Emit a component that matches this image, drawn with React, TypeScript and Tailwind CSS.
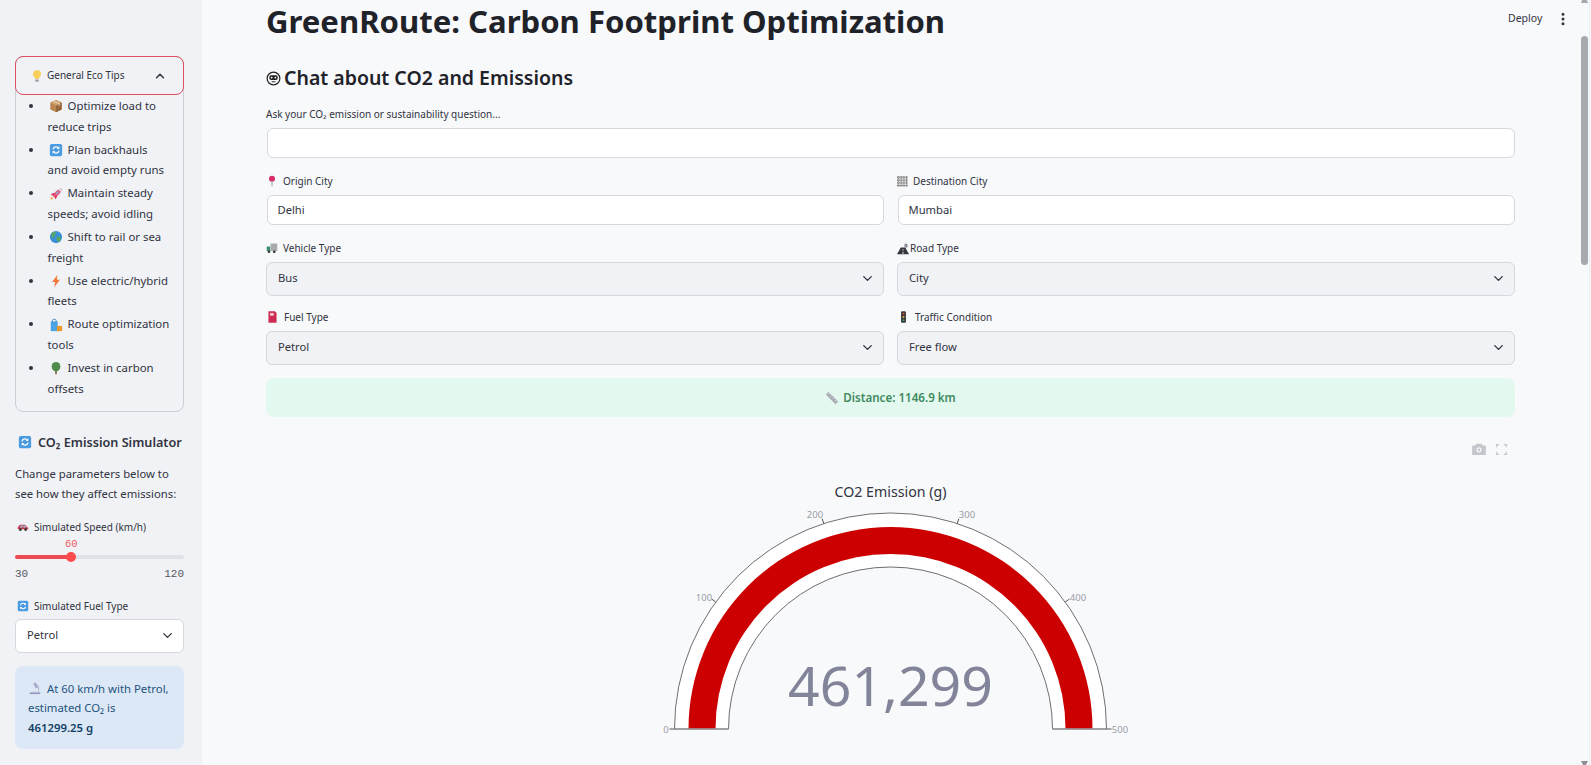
import type { ReactNode } from "react";
import { ChevronDown, ChevronUp, EllipsisVertical } from "lucide-react";

const FONT = "[font-family:'Noto_Sans',sans-serif]";

// small drawings standing in for the colour emoji
const Box = () => (
  <svg viewBox="0 0 16 16" className="w-[14px] h-[14px] shrink-0">
    <path d="M8 1l6.500 3v8L8 15l-6.500-3V4z" fill="#b98652" />
    <path d="M8 7.500L14.500 4v8L8 15z" fill="#96663a" />
    <path d="M1.500 4L8 1l6.500 3L8 7.500z" fill="#d0a373" />
    <path d="M4.500 2.600l6.500 3.200v2.400l1.200-.6V5.200L5.800 2z" fill="#ecd6b8" />
  </svg>
);
const Refresh = ({ size = "w-[14px] h-[14px]" }: { size?: string }) => (
  <svg viewBox="0 0 16 16" className={`${size} shrink-0`}>
    <rect x="1" y="1" width="14" height="14" rx="2" fill="#4b9be0" />
    <path d="M4.500 7.200A3.600 3.600 0 0 1 11 6M11.500 8.800A3.600 3.600 0 0 1 5 10" stroke="#fff" strokeWidth="1.400" fill="none" />
    <path d="M11.800 3.800v3h-3zM4.200 12.200v-3h3z" fill="#fff" />
  </svg>
);
const Rocket = () => (
  <svg viewBox="0 0 16 16" className="w-[14px] h-[14px] shrink-0">
    <path d="M1.500 14.500l1-3.500 2.500 2.500z" fill="#f2a43a" />
    <path d="M2 8.500l3.500-2 4 4-2 3.500-1.500-2.500L4.500 10z" fill="#d8325a" />
    <path d="M4.500 10C6 5.500 9.500 2.500 15 1c-1 5.500-4.500 9-9 10.500z" fill="#e8577a" />
    <path d="M10.500 2.800C12 2 13.500 1.500 15 1c-.4 1.500-1 3-1.800 4.400z" fill="#dfe2ea" />
    <circle cx="9.500" cy="6.500" r="1.500" fill="#8fa8d8" />
  </svg>
);
const Globe = () => (
  <svg viewBox="0 0 16 16" className="w-[14px] h-[14px] shrink-0">
    <circle cx="8" cy="8" r="7" fill="#3c8fd8" />
    <path d="M3 4c2-2 4-2 5-1 0 2-2 2-2 4s-2 2-3 1zM9 8c2-1 4 0 5 1-.5 2-2 4-4 4.500-1-1.500-2-3.500-1-5.500z" fill="#58a85c" />
  </svg>
);
const Bolt = () => (
  <svg viewBox="0 0 16 16" className="w-[14px] h-[14px] shrink-0">
    <path d="M9.500 1L3.500 9H7l-1 6 6.500-8.500H9z" fill="#f2793a" />
  </svg>
);
const Bag = () => (
  <svg viewBox="0 0 16 16" className="w-[14px] h-[14px] shrink-0">
    <path d="M2 4h8v11H2z" fill="#4ba3e3" />
    <path d="M4 5V2.500C4 1 8 1 8 2.500V5" stroke="#3b7fb8" fill="none" />
    <path d="M9 9h6v6H9z" fill="#ec9a2c" />
  </svg>
);
const Tree = () => (
  <svg viewBox="0 0 16 16" className="w-[14px] h-[14px] shrink-0">
    <path d="M7 10h2v5H7z" fill="#8a6a48" />
    <ellipse cx="8" cy="6.500" rx="5" ry="5.500" fill="#4f8c48" />
  </svg>
);
const Bulb = () => (
  <svg viewBox="0 0 16 16" className="w-[14px] h-[14px] shrink-0">
    <path d="M8 1a4.800 4.800 0 0 0-3 8.500c.7.700 1 1.300 1 2h4c0-.7.300-1.300 1-2A4.800 4.800 0 0 0 8 1z" fill="#f7cf5a" />
    <path d="M6 12h4v2.500H6z" fill="#9aa0a8" />
  </svg>
);
const Car = () => (
  <svg viewBox="0 0 16 16" className="w-[12px] h-[12px] shrink-0">
    <path d="M1 11V8.500L3.500 5H11l3 3.500 1 .5v2z" fill="#c9384a" />
    <path d="M5 6h2.500v2.500H3.500zM8.500 6H11l1.500 2.500h-4z" fill="#9cc4e4" />
    <circle cx="4.500" cy="11.500" r="1.800" fill="#333" />
    <circle cx="11.500" cy="11.500" r="1.800" fill="#333" />
  </svg>
);
const Microscope = () => (
  <svg viewBox="0 0 16 16" className="w-[14px] h-[14px] shrink-0">
    <path d="M6 3l2.500-1.500L11.500 7 9 8.500z" fill="#a4a8c4" />
    <path d="M2 13h12v2H2z" fill="#9498ba" />
    <path d="M9 3.500c3 1.500 4 5 2.500 9.500H5.500" stroke="#b4b8d0" strokeWidth="1.200" fill="none" />
  </svg>
);
const Robot = () => (
  <svg viewBox="0 0 16 16" className="w-[15px] h-[15px] shrink-0">
    <circle cx="8" cy="8" r="6.800" fill="none" stroke="#222" strokeWidth="1.300" />
    <rect x="3.500" y="4.500" width="9" height="5" rx="2" fill="#222" />
    <circle cx="6" cy="7" r="1" fill="#fff" />
    <circle cx="10" cy="7" r="1" fill="#fff" />
    <path d="M6 11.500h4" stroke="#222" />
  </svg>
);
const Pin = () => (
  <svg viewBox="0 0 16 16" className="w-[12px] h-[14px] shrink-0">
    <circle cx="8" cy="5" r="4" fill="#d92b66" />
    <path d="M8 8v7" stroke="#8f8f98" strokeWidth="1.200" />
  </svg>
);
const Checker = () => (
  <svg viewBox="0 0 12 12" className="w-[11px] h-[11px] shrink-0">
    <rect width="12" height="12" fill="#d8d8d8" />
    <path d="M0 1.500h12M0 4.500h12M0 7.500h12M0 10.500h12M1.500 0v12M4.500 0v12M7.500 0v12M10.500 0v12" stroke="#444" strokeWidth=".8" strokeDasharray="1 1" />
  </svg>
);
const Truck = () => (
  <svg viewBox="0 0 16 16" className="w-[12px] h-[12px] shrink-0">
    <path d="M6 2h9v10H6z" fill="#a6abb0" />
    <path d="M1 6h4.500v6H1z" fill="#3f8f6c" />
    <circle cx="4" cy="13" r="1.800" fill="#333" />
    <circle cx="11" cy="13" r="1.800" fill="#333" />
  </svg>
);
const Road = () => (
  <svg viewBox="0 0 16 16" className="w-[12px] h-[12px] shrink-0 translate-y-[1px]">
    <path d="M0 15L5 6h6l5 9z" fill="#33363c" />
    <path d="M8 8v2M8 11.500V15" stroke="#fff" />
    <path d="M10 1h4v5h-4z" fill="#8a8e96" />
  </svg>
);
const Fuel = () => (
  <svg viewBox="0 0 16 16" className="w-[13px] h-[14px] shrink-0">
    <path d="M3 1h8l2 2v12H3z" fill="#cc2b52" />
    <path d="M5 3h4.500v3.500H5z" fill="#f3c6d2" />
  </svg>
);
const TrafficLight = () => (
  <svg viewBox="0 0 16 16" className="w-[13px] h-[14px] shrink-0">
    <rect x="5" y="1" width="6" height="14" rx="1.500" fill="#34383d" />
    <circle cx="8" cy="4" r="1.300" fill="#d8483c" />
    <circle cx="8" cy="8" r="1.300" fill="#e4b23c" />
    <circle cx="8" cy="12" r="1.300" fill="#46a05c" />
  </svg>
);
const Ruler = () => (
  <svg viewBox="0 0 16 16" className="w-[14px] h-[14px] shrink-0">
    <path d="M1 4l3-3 11 11-3 3z" fill="#a8abb2" />
    <path d="M4 4l1.500-1.500M6.500 6.500L8 5M9 9l1.500-1.500M11.500 11.500L13 10" stroke="#eceef0" />
  </svg>
);

const tips: { icon: ReactNode; first: string; second: string }[] = [
  { icon: <Box />, first: "Optimize load to", second: "reduce trips" },
  { icon: <Refresh />, first: "Plan backhauls", second: "and avoid empty runs" },
  { icon: <Rocket />, first: "Maintain steady", second: "speeds; avoid idling" },
  { icon: <Globe />, first: "Shift to rail or sea", second: "freight" },
  { icon: <Bolt />, first: "Use electric/hybrid", second: "fleets" },
  { icon: <Bag />, first: "Route optimization", second: "tools" },
  { icon: <Tree />, first: "Invest in carbon", second: "offsets" },
];

function Label({ icon, text, gap = "gap-[5px]" }: { icon: ReactNode; text: string; gap?: string }) {
  return (
    <div className={`flex items-center ${gap} h-[16px] text-[10px] text-[#31333f]`}>
      {icon}
      <span>{text}</span>
    </div>
  );
}

function TextBox({ value }: { value?: string }) {
  return (
    <div className="mt-[6px] mx-[0.5px] h-[30px] flex items-center px-[10px] bg-white border border-[#d5d8de] rounded-[6px] text-[11.200px] text-[#31333f]">
      {value}
    </div>
  );
}

function SelectBox({ value, white }: { value: string; white?: boolean }) {
  return (
    <div
      className={`h-[33.500px] flex items-center justify-between pl-[11px] pr-[8px] border border-[#d5d8de] rounded-[6px] text-[11.200px] text-[#31333f] ${
        white ? "bg-white" : "bg-[#f0f2f6]"
      }`}
    >
      <span>{value}</span>
      <ChevronDown size={15} strokeWidth={2.200} className="text-[#31333f]" />
    </div>
  );
}

const CX = 249.5;
const CY = 259;

function band(outer: number, inner: number) {
  return `M${CX - outer} ${CY}A${outer} ${outer} 0 0 1 ${CX + outer} ${CY}L${CX + inner} ${CY}A${inner} ${inner} 0 0 0 ${CX - inner} ${CY}Z`;
}

const gaugeTicks = [
  { v: 0, x: 25, y: 259 },
  { v: 100, x: 63, y: 127 },
  { v: 200, x: 174, y: 44 },
  { v: 300, x: 326, y: 44 },
  { v: 400, x: 437, y: 127 },
  { v: 500, x: 479, y: 259 },
];

function Gauge() {
  return (
    <svg viewBox="0 0 500 295" className="w-[500px] h-[295px] shrink-0">
      <text x={CX} y="27" textAnchor="middle" fontFamily="'Noto Sans', sans-serif" fontSize="14.200" fill="#31333f">
        CO2 Emission (g)
      </text>
      <path d={band(216, 162)} fill="#fff" stroke="#6e6e74" strokeWidth="1" />
      <path d={band(202, 175)} fill="#cc0000" />
      <path d={`M${CX - 216} ${CY}H${CX - 162}M${CX + 162} ${CY}H${CX + 216}`} stroke="#9a9aa2" strokeWidth="1.600" />
      {gaugeTicks.map((t) => {
        const a = Math.PI * (1 - t.v / 500);
        const x1 = CX + 216 * Math.cos(a);
        const y1 = CY - 216 * Math.sin(a);
        const x2 = CX + 221 * Math.cos(a);
        const y2 = CY - 221 * Math.sin(a);
        return (
          <g key={t.v}>
            <line x1={x1} y1={y1} x2={x2} y2={y2} stroke="#555" strokeWidth="1" />
            <text
              x={t.x}
              y={t.y + 3.500}
              textAnchor="middle"
              fontFamily="'Noto Sans', sans-serif"
              fontSize="9.500"
              fill="#9a9ca8"
            >
              {t.v}
            </text>
          </g>
        );
      })}
      <text x={CX} y="235.500" textAnchor="middle" fontFamily="'Noto Sans', sans-serif" fontSize="55.400" fill="#82859a">
        461,299
      </text>
    </svg>
  );
}

export default function App() {
  return (
    <div className={`relative flex h-screen overflow-hidden bg-[#f8f9fb] text-[#31333f] ${FONT}`}>
      {/* Sidebar */}
      <div className="w-[202px] shrink-0 bg-[#f0f2f6] pl-[15px] pr-[18px] pt-[56px]">
        <div className="h-[356px] border border-[#ccd0d6] rounded-[8px]">
          <div className="-m-px h-[39px] flex items-center justify-between pl-[14px] pr-[16px] border border-[#dc5060] rounded-[8px]">
            <div className="flex items-center gap-[3px] text-[10px]">
              <Bulb />
              <span>General Eco Tips</span>
            </div>
            <ChevronUp size={14} strokeWidth={2.500} />
          </div>
          <ul className="flex flex-col gap-[2.700px] pl-[13px] pt-[2px] text-[11.400px] leading-[20.500px]">
            {tips.map((t) => (
              <li key={t.first} className="flex">
                <span className="shrink-0 w-[4px] h-[4px] mt-[8px] mr-[14.500px] rounded-full bg-[#31333f]" />
                <div>
                  <span className="inline-flex items-center gap-[5px] ml-[1px] align-top">
                    {t.icon}
                    {t.first}
                  </span>
                  <br />
                  {t.second}
                </div>
              </li>
            ))}
          </ul>
        </div>

        <div className="mt-[20px] h-[20px] flex items-center gap-[6px] pl-[3px] text-[12.650px] font-semibold">
          <Refresh />
          <span>CO₂ Emission Simulator</span>
        </div>
        <p className="mt-[12px] text-[11.300px] leading-[20px]">
          Change parameters below to
          <br />
          see how they affect emissions:
        </p>

        <div className="mt-[15px] pl-[2px]">
          <Label icon={<Car />} text="Simulated Speed (km/h)" />
        </div>
        <div className="mt-px h-[16px] pl-[50px] font-['Liberation_Mono',monospace] text-[10.500px] leading-[16px] text-[#ef5a5f]">
          60
        </div>
        <div className="relative mt-[3px] h-[4px] rounded-full bg-[#dfe2e8]">
          <div className="h-full w-[56px] rounded-full bg-[#ee4b50]" />
          <div className="absolute left-[51px] top-[-3px] w-[10px] h-[10px] rounded-full bg-[#ff4b4b]" />
        </div>
        <div className="mt-[7px] h-[16px] flex justify-between font-['Liberation_Mono',monospace] text-[11px] leading-[16px] text-[#555862]">
          <span>30</span>
          <span>120</span>
        </div>

        <div className="mt-[16px] pl-[2px]">
          <Label icon={<Refresh size="w-[12px] h-[12px]" />} text="Simulated Fuel Type" />
        </div>
        <div className="mt-[5px]">
          <SelectBox value="Petrol" white />
        </div>

        <div className="mt-[13.500px] h-[83px] rounded-[8px] bg-[#dce8f5] pl-[13px] pt-[12.500px] text-[11.350px] leading-[19.500px] text-[#1e5480]">
          <div className="flex items-center gap-[5px]">
            <Microscope />
            <span>At 60 km/h with Petrol,</span>
          </div>
          <div>estimated CO₂ is</div>
          <div className="font-semibold text-[#123f66]">461299.25 g</div>
        </div>
      </div>

      {/* Main content */}
      <div className="flex-1 min-w-0 pl-[64px]">
        <div className="w-[1249px]">
          <h1 className="h-[46px] text-[31.100px] leading-[43px] font-bold text-[#1f2329] whitespace-nowrap">
            GreenRoute: Carbon Footprint Optimization
          </h1>
          <h2 className="mt-[16px] h-[32px] flex items-center gap-[3px] text-[19.500px] font-semibold text-[#1f2329]">
            <Robot />
            <span>Chat about CO2 and Emissions</span>
          </h2>
          <div className="mt-[12px] h-[16px] flex items-center text-[10px]">
            Ask your CO₂ emission or sustainability question...
          </div>
          <TextBox />

          <div className="mt-[15px] grid grid-cols-2 gap-x-[13px]">
            <div>
              <Label icon={<Pin />} text="Origin City" />
              <TextBox value="Delhi" />
            </div>
            <div>
              <Label icon={<Checker />} text="Destination City" />
              <TextBox value="Mumbai" />
            </div>
            <div className="mt-[15px]">
              <Label icon={<Truck />} text="Vehicle Type" />
              <div className="mt-[6px]">
                <SelectBox value="Bus" />
              </div>
            </div>
            <div className="mt-[15px]">
              <Label icon={<Road />} text="Road Type" gap="gap-px" />
              <div className="mt-[6px]">
                <SelectBox value="City" />
              </div>
            </div>
            <div className="mt-[13.500px]">
              <Label icon={<Fuel />} text="Fuel Type" />
              <div className="mt-[6px]">
                <SelectBox value="Petrol" />
              </div>
            </div>
            <div className="mt-[13.500px]">
              <Label icon={<TrafficLight />} text="Traffic Condition" />
              <div className="mt-[6px]">
                <SelectBox value="Free flow" />
              </div>
            </div>
          </div>

          <div className="mt-[13.500px] h-[39px] flex items-center justify-center gap-[4px] rounded-[8px] bg-[#e3f8ee] text-[11.600px] font-semibold text-[#3f8a60]">
            <Ruler />
            <span>Distance: 1146.9 km</span>
          </div>

          <div className="mt-[24px] h-[16px] flex items-center justify-end gap-[10px] pr-[8px] text-[#c4c6cc]">
            <svg viewBox="0 0 16 14" className="w-[14px] h-[12px]">
              <path d="M5 1h6l1.300 2H15a1 1 0 0 1 1 1v9a1 1 0 0 1-1 1H1a1 1 0 0 1-1-1V4a1 1 0 0 1 1-1h2.700z" fill="currentColor" />
              <circle cx="8" cy="8" r="3" fill="#f8f9fb" />
              <circle cx="8" cy="8" r="1.500" fill="currentColor" />
            </svg>
            <svg viewBox="0 0 12 12" className="w-[11px] h-[11px]" fill="none" stroke="currentColor" strokeWidth="1.300">
              <path d="M.7 3.500V.7h2.800M8.500.7h2.800v2.800M11.300 8.500v2.800H8.500M3.500 11.300H.7V8.500" />
            </svg>
          </div>

          <div className="mt-[12.500px] flex justify-center">
            <Gauge />
          </div>
        </div>
      </div>

      {/* Toolbar and page scrollbar sit over the content */}
      <div className="absolute top-[10px] left-[1508px] h-[18px] flex items-center text-[10.500px] text-[#31333f]">Deploy</div>
      <EllipsisVertical size={16} strokeWidth={2.500} className="absolute top-[11px] left-[1555px] text-[#31333f]" />
      <div className="absolute top-0 left-[1589px] w-px h-full bg-[#eceef2]" />
      <div className="absolute top-0 left-[1581px] w-[7px] h-[3px] bg-[#a8a9ae] [clip-path:polygon(15%_0,85%_0,100%_100%,0_100%)]" />
      <div className="absolute top-[36px] left-[1581px] w-[7px] h-[229px] rounded-full bg-[#a8a9ae]" />
      <div className="absolute bottom-0 left-[1581px] w-[7px] h-[4px] bg-[#8f9096] [clip-path:polygon(0_0,100%_0,70%_100%,30%_100%)]" />
    </div>
  );
}
